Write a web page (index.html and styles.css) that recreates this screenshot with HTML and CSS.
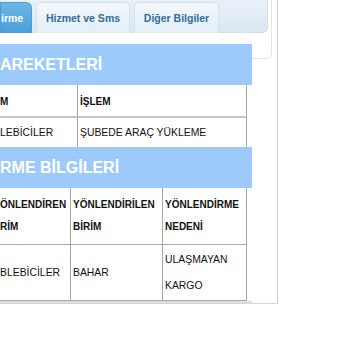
FILE: index.html
```html
<!DOCTYPE html>
<html lang="tr">
<head>
<meta charset="utf-8">
<link rel="stylesheet" href="styles.css">
</head>
<body>
<div class="frame">
  <div class="tabs-panel">
    <div class="tabbar">
      <div class="tab active">irme</div>
      <div class="tab t2">Hizmet ve Sms</div>
      <div class="tab t3">Diğer Bilgiler</div>
    </div>
  </div>

  <div class="title first">AREKETLERİ</div>
  <div class="grid g1">
    <div class="cell head c1">M</div>
    <div class="cell head c2">İŞLEM</div>
    <div class="cell data c1">LEBİCİLER</div>
    <div class="cell data c2">ŞUBEDE ARAÇ YÜKLEME</div>
  </div>

  <div class="title">RME BİLGİLERİ</div>
  <div class="wrap2">
    <div class="grid g2">
      <div class="cell head c1">ÖNLENDİREN<br>RİM</div>
      <div class="cell head c2">YÖNLENDİRİLEN<br>BİRİM</div>
      <div class="cell head c3">YÖNLENDİRME<br>NEDENİ</div>
      <div class="cell data c1">BLEBİCİLER</div>
      <div class="cell data c2">BAHAR</div>
      <div class="cell data c3">ULAŞMAYAN<br>KARGO</div>
    </div>
  </div>
</div>
</body>
</html>
```
FILE: styles.css
```css
* { box-sizing: border-box; }
html, body { margin: 0; padding: 0; background: #fff; }
body {
  width: 350px;
  height: 350px;
  overflow: hidden;
  font-family: "Liberation Sans", Arial, sans-serif;
  color: #111;
}
.frame {
  width: 278px;
  border-right: 1px solid #cfcfcf;
  border-bottom: 1px solid #d6d6d6;
}
.tabs-panel {
  width: 272px;
  height: 59px;
  padding-right: 3px;
  border-right: 1px solid #e2e6ea;
  border-bottom: 1px solid #e2e6ea;
  border-bottom-right-radius: 5px;
}
.tabbar {
  height: 33px;
  padding-top: 2px;
  display: flex;
  gap: 4px;
  background: linear-gradient(#e9f1f9, #d9e7f3);
  border-right: 1px solid #d2e0ec;
  border-bottom: 1px solid #d2e0ec;
  border-bottom-right-radius: 5px;
}
.tab {
  height: 31px;
  display: flex;
  align-items: center;
  justify-content: center;
  font-size: 10.5px;
  font-weight: bold;
  color: #2f6d9c;
  background: linear-gradient(#f3f8fc, #e3eef7);
  border: 1px solid #d3e2ee;
  border-bottom: none;
  border-radius: 5px 5px 0 0;
}
.tab.active {
  width: 32px;
  color: #fff;
  background: linear-gradient(#6db6e7, #4a9fd8);
  border-color: #4a9fd8;
  border-radius: 0 6px 0 0;
  justify-content: flex-start;
  padding-left: 0;
}
.tab.t2 { width: 94px; }
.tab.t3 { width: 85px; }
.title {
  width: 252px;
  height: 41px;
  background: #9ccbfb;
  color: #fff;
  font-size: 16px;
  font-weight: bold;
  line-height: 41px;
  white-space: nowrap;
}
.title.first { margin-top: -15px; }
.grid {
  display: grid;
  width: 247px;
}
.g1 { grid-template-columns: 78px 169px; }
.g2 { grid-template-columns: 71px 92px 84px; }
.cell {
  display: flex;
  align-items: center;
  padding-left: 2px;
  border-right: 1px solid #a8a8a8;
  white-space: nowrap;
  overflow: hidden;
}
.cell.c1 { padding-left: 0; }
.head { font-size: 10px; font-weight: bold; }
.data { font-size: 10.4px; }
.g1 .head { height: 33px; border-bottom: 2px solid #c6c6c6; padding-top: 1px; }
.g1 .data { height: 29px; }
.g2 .head { height: 57px; line-height: 22px; border-bottom: 1px solid #a8a8a8; }
.g2 .data { height: 56px; line-height: 26px; border-bottom: 1px solid #a8a8a8; }
.wrap2 {
  width: 252px;
  border-bottom: 2px solid #dcdcdc;
}
```
